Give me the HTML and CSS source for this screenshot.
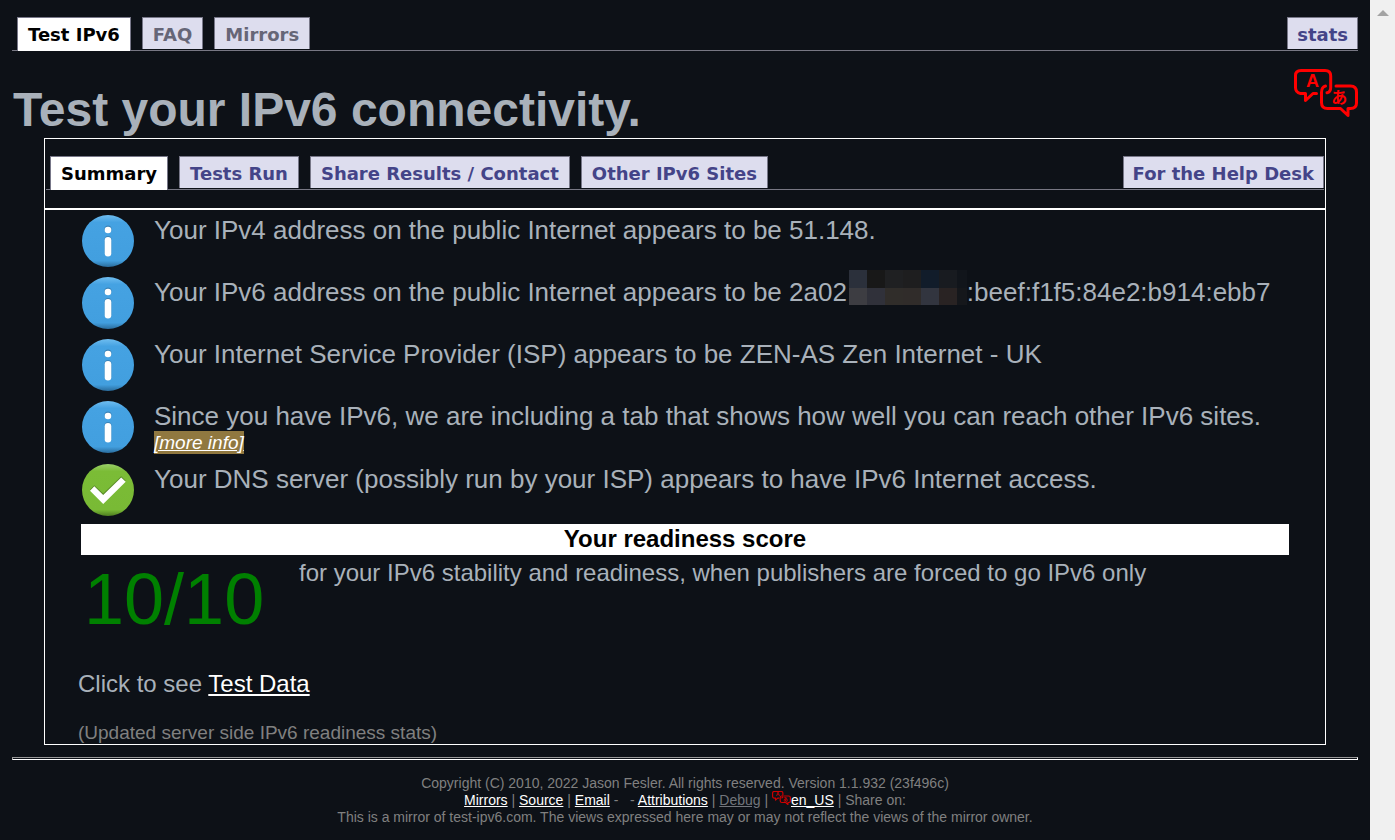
FILE: index.html
```html
<!DOCTYPE html>
<html lang="en">
<head>
<meta charset="utf-8">
<title>Test your IPv6.</title>
<link rel="stylesheet" href="styles.css">
</head>
<body>
<svg class="defs" aria-hidden="true">
  <defs>
    <linearGradient id="blue" x1="0" y1="0" x2="0" y2="1">
      <stop offset="0" stop-color="#6fbdf0"/><stop offset=".14" stop-color="#45a2e2"/><stop offset=".88" stop-color="#429fdf"/><stop offset="1" stop-color="#2a6c9c"/>
    </linearGradient>
    <linearGradient id="green" x1="0" y1="0" x2="0" y2="1">
      <stop offset="0" stop-color="#9bcf6a"/><stop offset=".14" stop-color="#7bbc36"/><stop offset=".88" stop-color="#79ba35"/><stop offset="1" stop-color="#4e7d20"/>
    </linearGradient>
    <symbol id="info" viewBox="0 0 52 52">
      <circle cx="26" cy="26" r="26" fill="url(#blue)"/>
      <circle cx="26" cy="14.2" r="3.6" fill="#3a83b8"/>
      <circle cx="26" cy="15" r="3.3" fill="#fff"/>
      <rect x="22.5" y="21" width="7" height="20" rx="3.5" fill="#3a83b8"/>
      <rect x="22.7" y="22" width="6.6" height="19.5" rx="3.3" fill="#fff"/>
    </symbol>
    <symbol id="check" viewBox="0 0 52 52">
      <circle cx="26" cy="26" r="26" fill="url(#green)"/>
      <path d="M8 25.500L12.300 21.300L21.200 29.500L39.200 12.200L43.700 16.700L21.200 38.500Z" fill="#5a8c28"/>
      <path d="M8 26.800L12.300 22.300L21.200 31L39.200 13.500L43.700 17.700L21.200 40Z" fill="#fff"/>
    </symbol>
    <symbol id="lang" viewBox="0 0 64 48">
      <g class="bubbles">
        <path d="M22.500 24.500H19L11.500 31.500V24.500H6.500Q1.500 23.500 1.500 18.500V6.500Q1.500 1.500 7 1.500H31Q36.700 1.500 36.700 7V18.500Q36.700 23 33 23.800"/>
        <path d="M42 17H56.500Q62.500 17 62.500 23V34Q62.500 39.500 56.500 39.500H54V46.500L46.500 39.500H33.500Q27.500 39.500 27.500 33.500V23.500Q27.500 18 31.500 17"/>
      </g>
      <text class="lang-latin" x="18.500" y="18" text-anchor="middle">A</text>
      <text class="lang-kana" x="45.300" y="34" text-anchor="middle">あ</text>
    </symbol>
  </defs>
</svg>
<div class="window">
  <div class="page">
    <nav class="tabs" aria-label="Site">
      <a class="tab active" href="#">Test IPv6</a>
      <a class="tab muted" href="#faq">FAQ</a>
      <a class="tab muted" href="#mirrors">Mirrors</a>
      <a class="tab end" href="#stats">stats</a>
    </nav>
    <header class="heading">
      <h1>Test your IPv6 connectivity.</h1>
      <a class="language" href="#lang" aria-label="Language"><svg><use href="#lang"/></svg></a>
    </header>
    <main class="panel">
      <div class="panel-nav">
        <nav class="tabs" aria-label="Results">
          <a class="tab active" href="#summary">Summary</a>
          <a class="tab" href="#tests">Tests Run</a>
          <a class="tab" href="#share">Share Results / Contact</a>
          <a class="tab" href="#sites">Other IPv6 Sites</a>
          <a class="tab end" href="#help">For the Help Desk</a>
        </nav>
      </div>
      <div class="summary">
        <ul class="results">
          <li><svg class="status"><use href="#info"/></svg><p>Your IPv4 address on the public Internet appears to be 51.148.</p></li>
          <li><svg class="status"><use href="#info"/></svg><p>Your IPv6 address on the public Internet appears to be 2a02<span class="redacted"><i></i><i></i><i></i><i></i><i></i><i></i><i></i><i></i><i></i><i></i><i></i><i></i><i></i><i></i></span>:beef:f1f5:84e2:b914:ebb7</p></li>
          <li><svg class="status"><use href="#info"/></svg><p>Your Internet Service Provider (ISP) appears to be ZEN-AS Zen Internet - UK</p></li>
          <li><svg class="status"><use href="#info"/></svg><p>Since you have IPv6, we are including a tab that shows how well you can reach other IPv6 sites. <a class="more" href="#more">[more info]</a></p></li>
          <li><svg class="status"><use href="#check"/></svg><p>Your DNS server (possibly run by your ISP) appears to have IPv6 Internet access.</p></li>
        </ul>
        <h2>Your readiness score</h2>
        <div class="score">
          <strong>10/10</strong>
          <p>for your IPv6 stability and readiness, when publishers are forced to go IPv6 only</p>
        </div>
        <p class="data">Click to see <a href="#data">Test Data</a></p>
        <p class="updated">(Updated server side IPv6 readiness stats)</p>
      </div>
    </main>
    <hr>
    <footer>
      <p>Copyright (C) 2010, 2022 Jason Fesler. All rights reserved. Version 1.1.932 (23f496c)</p>
      <p><a href="#mirrors">Mirrors</a> | <a href="#source">Source</a> | <a href="#email">Email</a> - &nbsp; - <a href="#attributions">Attributions</a> | <a class="dim" href="#debug">Debug</a> | <a href="#lang"><svg class="mini"><use href="#lang"/></svg>en_US</a> | Share on:</p>
      <p>This is a mirror of test-ipv6.com. The views expressed here may or may not reflect the views of the mirror owner.</p>
    </footer>
  </div>
  <div class="scroll-track"><span class="scroll-up"></span></div>
</div>
</body>
</html>
```

FILE: styles.css
```css
* { box-sizing: border-box; }
body { margin: 0; background: #0d1117; color: #a9b1ba; font-family: "Liberation Sans", Arial, sans-serif; }
h1, h2, p, ul { margin: 0; padding: 0; }
a { color: #fff; }
.defs { position: absolute; width: 0; height: 0; }
.window { display: grid; grid-template-columns: minmax(0, 1fr) 25px; min-height: 100vh; }
.page { padding: 17px 12px 0; }
.scroll-track { background: #f0f0f0; display: flex; justify-content: center; align-items: flex-start; padding-top: 10px; }
.scroll-up { border: 6px solid transparent; border-top: 0; border-bottom-color: #a3a3a3; }

.tabs { display: flex; gap: 11px; padding-left: 5px; border-bottom: 1px solid #777783; font: bold 18px/30px "DejaVu Sans", Verdana, sans-serif; }
.tab { height: 32px; padding: 2px 10px 0; border: 1px solid #778; border-bottom: 0; background: #ddddee; color: #444488; text-decoration: none; white-space: nowrap; }
.tab.active { height: 34px; margin-bottom: -1px; background: #fff; color: #000; }
.tab.muted { color: #667; }
.tab.end { margin-left: auto; padding: 2px 9px 0; }

.heading { display: flex; justify-content: space-between; height: 87px; }
h1 { padding: 32px 0 0 1px; font-size: 48px; line-height: 54px; }
.language { padding-top: 18px; color: #f00; }
.language svg { display: block; width: 64px; height: 48px; }
.bubbles { fill: none; stroke: currentColor; stroke-width: var(--line, 3); stroke-linejoin: round; stroke-linecap: round; }
.lang-latin { font: bold 18px "Liberation Sans", sans-serif; fill: currentColor; }
.lang-kana { font: bold 16px "Noto Sans CJK JP", sans-serif; fill: currentColor; }

.panel { margin: 0 32px; border: 1px solid #fff; }
.panel-nav { padding: 17px 1px 18px; border-bottom: 2px solid #fff; }
.panel-nav .tabs { padding-left: 4px; }
.summary { padding: 0 36px 0 33px; }
.results { list-style: none; }
.results li { display: flex; gap: 20px; padding: 5px 0 5px 4px; }
.status { flex: none; width: 52px; height: 52px; }
.results p { font-size: 26px; line-height: 30px; }
.more { display: table; background: #907840; font-size: 19px; line-height: 23px; font-style: italic; }
.redacted { display: inline-grid; grid-template: 18px 17px / repeat(6, 18px) 10px; vertical-align: middle; margin: -15px 0 -2px 2px; }
.redacted i:nth-child(1) { background: #2b303b; }
.redacted i:nth-child(2) { background: #181818; }
.redacted i:nth-child(3) { background: #1f2022; }
.redacted i:nth-child(4) { background: #1e1e1f; }
.redacted i:nth-child(5) { background: #111c2a; }
.redacted i:nth-child(6) { background: #181b20; }
.redacted i:nth-child(7) { background: #11151b; }
.redacted i:nth-child(8) { background: #3d3d42; }
.redacted i:nth-child(9) { background: #30313a; }
.redacted i:nth-child(10) { background: #302d2a; }
.redacted i:nth-child(11) { background: #302c2a; }
.redacted i:nth-child(12) { background: #32353f; }
.redacted i:nth-child(13) { background: #292323; }
.redacted i:nth-child(14) { background: #15171b; }
h2 { margin: 3px 0 0 3px; padding-bottom: 2px; background: #fff; color: #000; font-size: 24px; line-height: 29px; text-align: center; }
.score { display: flex; padding: 3px 0 0 6px; }
.score strong { flex: none; width: 215px; color: #008000; font-size: 72px; font-weight: normal; line-height: 82px; }
.score p { font-size: 24px; line-height: 30px; }
.data { padding-top: 29px; font-size: 24px; line-height: 30px; }
.updated { padding-top: 23px; color: #808080; font-size: 19px; line-height: 22px; }

hr { height: 3px; margin: 12px 0 15px; border: 1px solid #fff; border-top-color: #999; border-left-color: #999; }
footer { color: #808080; font-size: 14px; line-height: 17px; text-align: center; }
footer .dim { color: #72767c; }
.mini { --line: 4; width: 19px; height: 14px; margin-top: -4px; color: #d00000; }
```
